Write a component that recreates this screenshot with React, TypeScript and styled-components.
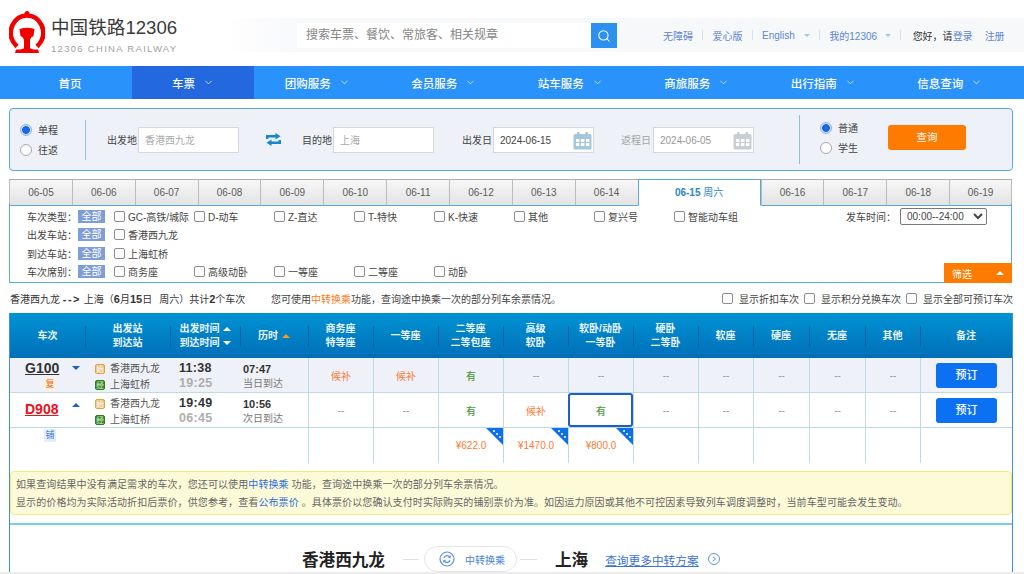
import styled, { createGlobalStyle } from "styled-components";
import { ChevronDown, Search } from "lucide-react";

const GlobalStyle = createGlobalStyle`
  html, body {
    margin: 0;
    background: #fff;
    overflow: hidden;
  }
  body {
    font-family: "Liberation Sans", "Noto Sans CJK SC", sans-serif;
    font-size: 10px;
    color: #444;
  }
  * {
    box-sizing: border-box;
  }
`;

const COLUMNS = "75px 85px 70px 68px repeat(6, 65px) 55px 56px 56px 55px 92px";

const Page = styled.div`
  position: relative;
  width: 1024px;
  height: 574px;
  overflow: hidden;
  &::after {
    content: "";
    position: absolute;
    left: 0;
    right: 0;
    bottom: 0;
    height: 2px;
    background: #ececec;
  }
`;

/* header */
const Header = styled.header`
  height: 66px;
  display: flex;
  align-items: flex-start;
`;

const Brand = styled.div`
  width: 220px;
  height: 66px;
  padding: 11px 0 0 9px;
  display: flex;
  gap: 6px;
`;

const BrandText = styled.div`
  padding-top: 5px;
`;

const BrandName = styled.div`
  font-size: 18.6px;
  line-height: 24px;
  color: #3a3a3a;
  white-space: nowrap;
`;

const BrandSub = styled.div`
  font-size: 9.5px;
  line-height: 12px;
  margin-top: 3px;
  letter-spacing: 1.3px;
  color: #a2a2a2;
  white-space: nowrap;
`;

const HeaderBand = styled.div`
  flex: 1;
  height: 34px;
  margin-top: 18px;
  padding-left: 77px;
  display: flex;
  align-items: flex-start;
  background: linear-gradient(90deg, #fff 0, #f7f8fa 90px);
`;

const SearchBox = styled.div`
  width: 320px;
  height: 25px;
  margin-top: 5px;
  display: flex;
  background: #fff;
`;

const SearchInput = styled.div`
  flex: 1;
  padding-left: 9px;
  font-size: 12px;
  line-height: 25px;
  color: #858585;
`;

const SearchButton = styled.div`
  width: 26px;
  display: flex;
  align-items: center;
  justify-content: center;
  background: #2c90f0;
  color: #fff;
`;

const TopLinks = styled.div`
  margin-left: 46px;
  height: 34px;
  display: flex;
  align-items: center;
  font-size: 10px;
  color: #5c86d6;
  white-space: nowrap;
`;

const TopSep = styled.span`
  width: 1px;
  height: 10px;
  margin: 0 9.25px;
  background: #d5e2f2;
`;

const Greeting = styled.span`
  margin-left: 2px;
  color: #333;
`;

const RegisterLink = styled.span`
  margin-left: 12px;
`;

const Caret = styled.span<{ $dir?: "up" | "down"; $color?: string; $size?: number; $gap?: number }>`
  display: inline-block;
  width: 0;
  height: 0;
  margin-left: ${({ $gap }) => $gap ?? 8}px;
  border-left: ${({ $size }) => $size ?? 4}px solid transparent;
  border-right: ${({ $size }) => $size ?? 4}px solid transparent;
  ${({ $dir, $color, $size }) =>
    $dir === "up"
      ? `border-bottom: ${$size ?? 4}px solid ${$color ?? "#fff"};`
      : `border-top: ${$size ?? 4}px solid ${$color ?? "#fff"};`}
`;

/* nav */
const Nav = styled.nav`
  height: 33px;
  display: grid;
  grid-template-columns: 132px 122px repeat(6, 126.5px);
  background: #2a92fb;
`;

const NavItem = styled.div<{ $active?: boolean; $home?: boolean }>`
  display: flex;
  align-items: center;
  justify-content: center;
  gap: 8px;
  padding-left: ${({ $home }) => ($home ? "8px" : "0")};
  font-size: 11.5px;
  font-weight: 500;
  color: #fff;
  background: ${({ $active }) => ($active ? "#2468df" : "transparent")};
`;

const Main = styled.main`
  padding: 9px 11px 0 9px;
`;

/* search form */
const QueryPanel = styled.section`
  height: 63px;
  display: flex;
  align-items: center;
  background: #eef1f8;
  border: 1px solid #5aa9dc;
  border-radius: 4px;
`;

const RadioColumn = styled.div<{ $left: number; $raised?: boolean }>`
  width: ${({ $left }) => $left + 38}px;
  padding-left: ${({ $left }) => $left}px;
  margin-top: ${({ $raised }) => ($raised ? "-4px" : "0")};
  display: flex;
  flex-direction: column;
  gap: 8px;
`;

const RadioRow = styled.label`
  display: flex;
  align-items: center;
  gap: 6px;
  height: 12px;
  color: #444;
  white-space: nowrap;
`;

const RadioDot = styled.span<{ $on?: boolean }>`
  width: 12px;
  height: 12px;
  border-radius: 50%;
  flex: none;
  background: ${({ $on }) => ($on ? "radial-gradient(circle, #1f66e0 0 3.6px, #cfe0f8 4.2px)" : "#fff")};
  border: 1px solid ${({ $on }) => ($on ? "#8cb4ee" : "#a8a8a8")};
`;

const Divider = styled.div<{ $height: number; $left: number }>`
  width: 1px;
  height: ${({ $height }) => $height}px;
  margin-left: ${({ $left }) => $left}px;
  background: #8dbfe0;
`;

const Field = styled.div<{ $left: number; $gap?: number; $muted?: boolean }>`
  margin-left: ${({ $left }) => $left}px;
  display: flex;
  align-items: center;
  gap: ${({ $gap }) => $gap ?? 1}px;
  white-space: nowrap;
  color: ${({ $muted }) => ($muted ? "#a4a4a4" : "#444")};
`;

const FieldInput = styled.div<{ $tone?: string }>`
  position: relative;
  width: 101px;
  height: 26px;
  padding-left: 6px;
  line-height: 25px;
  background: #fff;
  border: 1px solid #d3d8e2;
  color: ${({ $tone }) => $tone ?? "#aaa"};
`;

const CalendarSlot = styled.span`
  position: absolute;
  right: 1px;
  top: 4px;
  line-height: 0;
`;

const SwapIcon = styled.svg`
  margin-left: 27px;
  margin-right: -6px;
  flex: none;
`;

const QueryButton = styled.div`
  width: 78px;
  height: 25px;
  margin-left: 30px;
  margin-top: -4px;
  line-height: 25px;
  text-align: center;
  font-size: 10.5px;
  color: #fff;
  background: #ff7a00;
  border-radius: 3px;
`;

/* date tabs */
const Tabs = styled.div`
  margin-top: 8px;
  width: 1003px;
  height: 25px;
  display: grid;
  grid-template-columns: repeat(10, 1fr) 123px repeat(4, 1fr);
`;

const Tab = styled.div<{ $active?: boolean }>`
  text-align: center;
  line-height: 25px;
  white-space: nowrap;
  font-size: 10px;
  color: ${({ $active }) => ($active ? "#2a86c8" : "#5c5c5c")};
  background: ${({ $active }) => ($active ? "#fff" : "linear-gradient(#f7f7f7, #e3e3e3)")};
  border-top: 1px solid ${({ $active }) => ($active ? "#5aa9dc" : "#adadad")};
  border-left: 1px solid ${({ $active }) => ($active ? "#5aa9dc" : "#bcbcbc")};
  border-right: ${({ $active }) => ($active ? "1px solid #5aa9dc" : "none")};
  border-bottom: 1px solid ${({ $active }) => ($active ? "#fff" : "#5aa9dc")};
  &:last-child {
    border-right: 1px solid #bcbcbc;
  }
`;

const TabDate = styled.b`
  font-weight: 700;
`;

const FilterBox = styled.section`
  position: relative;
  width: 1003px;
  height: 80px;
  padding: 5px 0 0 17px;
  margin-top: -1px;
  border: 1px solid #5aa9dc;
  border-top-color: transparent;
  display: flex;
  flex-direction: column;
  gap: 4.5px;
`;

const FilterRow = styled.div`
  height: 14px;
  display: flex;
  align-items: center;
  white-space: nowrap;
  color: #444;
`;

const FilterLabel = styled.span`
  width: 51px;
`;

const AllPill = styled.span`
  width: 27px;
  height: 13px;
  margin-right: 9px;
  line-height: 13px;
  text-align: center;
  color: #fff;
  background: #7f9dd6;
`;

const FilterOption = styled.label`
  width: 80px;
  display: flex;
  align-items: center;
  gap: 3px;
  flex: none;
`;

const Check = styled.span`
  width: 11px;
  height: 11px;
  flex: none;
  background: #fff;
  border: 1px solid #8c8c8c;
  border-radius: 2px;
`;

const TimeFilter = styled.div`
  margin-left: 92px;
  display: flex;
  align-items: center;
  gap: 4px;
  margin-top: 1px;
`;

const TimeSelect = styled.select`
  width: 87px;
  height: 17px;
  padding: 0 0 0 2px;
  font-family: inherit;
  font-size: 10px;
  color: #444;
  background: #fff;
  border: 1px solid #777;
  border-radius: 2px;
`;

const FilterToggle = styled.div`
  position: absolute;
  right: -1px;
  bottom: -1px;
  width: 68px;
  height: 20px;
  padding: 0 8px;
  display: flex;
  align-items: center;
  justify-content: space-between;
  color: #fff;
  background: #ff7a00;
`;

/* summary line */
const Summary = styled.div`
  height: 30px;
  width: 1004px;
  display: flex;
  align-items: center;
  white-space: nowrap;
  color: #444;
`;

const SummaryRoute = styled.span`
  margin-left: 1px;
  width: 261px;
  color: #333;
`;

const RouteBold = styled.b`
  font-size: 11px;
`;

const RouteArrow = styled(RouteBold)`
  letter-spacing: 1.5px;
`;

const RouteWeek = styled.span`
  margin-left: 7px;
`;

const Hot = styled.span`
  color: #ff7a1a;
`;

const SummaryOptions = styled.div`
  margin-left: auto;
  display: flex;
  gap: 5px;
`;

const SummaryOption = styled.label`
  display: flex;
  align-items: center;
  gap: 6px;
`;

/* results */
const Results = styled.section`
  width: 1004px;
  height: 261px;
  border-left: 1px solid #3f93d2;
  border-right: 1px solid #3f93d2;
`;

const TableHead = styled.div`
  height: 45px;
  display: grid;
  grid-template-columns: ${COLUMNS};
  background: linear-gradient(#0093d4, #006fb8);
`;

const HeadCell = styled.div<{ $first?: boolean }>`
  position: relative;
  padding-top: 1px;
  display: flex;
  flex-direction: column;
  justify-content: center;
  align-items: center;
  font-size: 10px;
  font-weight: 700;
  line-height: 14px;
  color: #eaf5ff;
  white-space: nowrap;
  &::before {
    content: "";
    display: ${({ $first }) => ($first ? "none" : "block")};
    position: absolute;
    left: 0;
    top: 13px;
    bottom: 11px;
    width: 1px;
    background: #0b62a3;
  }
`;

const HeadLine = styled.span`
  display: flex;
  align-items: center;
`;

const Row = styled.div<{ $shaded?: boolean; $flush?: boolean }>`
  height: 35px;
  display: grid;
  grid-template-columns: ${COLUMNS};
  background: ${({ $shaded }) => ($shaded ? "#eef1f8" : "#fff")};
  border-bottom: ${({ $flush }) => ($flush ? "none" : "1px solid #bcdbe4")};
`;

const TrainCell = styled.div`
  position: relative;
  padding: 3px 0 0 15px;
`;

const TrainNo = styled.div<{ $red?: boolean }>`
  font-size: 14px;
  font-weight: 700;
  line-height: 15px;
  margin-top: ${({ $red }) => ($red ? "6px" : "0")};
  text-decoration: underline;
  color: ${({ $red }) => ($red ? "#e8111d" : "#333")};
`;

const TrainCaret = styled.span<{ $low?: boolean }>`
  position: absolute;
  top: ${({ $low }) => ($low ? "10px" : "8px")};
  left: 62px;
  line-height: 0;
`;

const Tag = styled.span<{ $blue?: boolean }>`
  position: absolute;
  left: 34px;
  bottom: 1px;
  width: 12px;
  height: 13px;
  font-size: 9px;
  line-height: 13px;
  text-align: center;
  color: ${({ $blue }) => ($blue ? "#3b7fd8" : "#ee6a10")};
  background: ${({ $blue }) => ($blue ? "#e4eefb" : "#fdf0e0")};
`;

const BunkTag = styled(Tag)`
  bottom: auto;
  top: 1px;
`;

const StationCell = styled.div`
  padding: 3px 0 0 10px;
  display: flex;
  flex-direction: column;
  justify-content: center;
  gap: 5px;
`;

const StationLine = styled.div`
  display: flex;
  align-items: center;
  gap: 5px;
  line-height: 11px;
  color: #555;
  white-space: nowrap;
`;

const StationBadge = styled.span<{ $kind: "start" | "via" }>`
  width: 10px;
  height: 10px;
  border-radius: 2px;
  font-size: 7.5px;
  line-height: 9px;
  text-align: center;
  color: ${({ $kind }) => ($kind === "start" ? "#fff" : "#d8ecd0")};
  background: ${({ $kind }) => ($kind === "start" ? "#efc27c" : "#3f8f2e")};
  border: 1px solid ${({ $kind }) => ($kind === "start" ? "#d9a24f" : "#2f7a22")};
`;

const TimeCell = styled.div`
  padding: 2px 0 0 9px;
  display: flex;
  flex-direction: column;
  justify-content: center;
  font-size: 12.5px;
  font-weight: 700;
  line-height: 15px;
  color: #333;
  letter-spacing: 0.3px;
`;

const ArriveTime = styled.span`
  color: #aeaeae;
`;

const DurationCell = styled.div`
  padding: 2px 0 0 3px;
  display: flex;
  flex-direction: column;
  justify-content: center;
  gap: 1px;
  line-height: 14px;
  color: #777;
`;

const DurationValue = styled.b`
  font-size: 11px;
  color: #333;
`;

const SeatCell = styled.div<{ $tone?: "hot" | "ok" | "none"; $selected?: boolean }>`
  position: relative;
  display: flex;
  align-items: center;
  justify-content: center;
  border-left: 1px solid #bcdbe4;
  font-size: 10px;
  color: ${({ $tone }) => ($tone === "hot" ? "#ff7a33" : $tone === "ok" ? "#4c9a3c" : "#999")};
  font-weight: ${({ $tone }) => ($tone === "ok" ? 500 : 400)};
  ${({ $selected }) =>
    $selected ? "outline: 2px solid #1f5ec9; outline-offset: -2px; border-radius: 3px;" : ""}
`;

const Corner = styled.svg`
  position: absolute;
  top: 0;
  right: 0;
`;

const BookCell = styled.div`
  display: flex;
  align-items: center;
  justify-content: center;
  border-left: 1px solid #bcdbe4;
`;

const BookButton = styled.div`
  width: 61px;
  height: 25px;
  margin-top: 1px;
  line-height: 25px;
  text-align: center;
  font-size: 11px;
  font-weight: 500;
  color: #fff;
  background: #0b70f2;
  border-radius: 3px;
`;

const Notice = styled.div`
  height: 44px;
  margin-top: 8px;
  padding: 1px 0 0 5px;
  font-size: 10px;
  line-height: 18px;
  letter-spacing: 0.1px;
  display: flex;
  flex-direction: column;
  justify-content: center;
  color: #666;
  background: #fdfad8;
  border: 1px solid #f7e87e;
  border-radius: 4px;
  white-space: nowrap;
`;

const Link = styled.span`
  color: #2a6fe0;
`;

const Transfer = styled.div`
  height: 70px;
  margin-top: 8px;
  padding-left: 292px;
  display: flex;
  align-items: center;
  border-top: 2px solid #7accef;
  white-space: nowrap;
`;

const City = styled.div`
  font-size: 16.6px;
  font-weight: 700;
  color: #222;
`;

const Dash = styled.span<{ $width: number; $before: number; $after: number }>`
  width: ${({ $width }) => $width}px;
  height: 1px;
  margin: 0 ${({ $after }) => $after}px 0 ${({ $before }) => $before}px;
  background: #e0e0e0;
`;

const TransferPill = styled.div`
  width: 93px;
  height: 26px;
  padding-left: 14px;
  display: flex;
  align-items: center;
  gap: 10px;
  color: #4a80dc;
  background: #fff;
  border: 1px solid #e6e6e6;
  border-radius: 13px;
`;

const MoreLink = styled.span`
  margin-left: 17px;
  font-size: 11.7px;
  color: #3c72d8;
  text-decoration: underline;
`;

const MoreIcon = styled.svg`
  margin-left: 9px;
`;

function Logo() {
  return (
    <svg width="36" height="42" viewBox="0 0 36 42">
      <circle cx="18" cy="2.5" r="2.5" fill="#f20000" />
      <path
        d="M8 35.5 C1 29 0.5 21 3.5 14 C7 7 12 4.5 18 4.5 C24 4.5 29 7 32.5 14 C35.5 21 35 29 28 35.5"
        fill="none"
        stroke="#f20000"
        strokeWidth="4.6"
      />
      <path
        d="M10.5 18 Q18 15.5 25.5 18 L24.5 25 Q21.5 26 21 29 L21 37 Q22 38.5 29 38.5 L30 42 L6 42 L7 38.5 Q14 38.5 15 37 L15 29 Q14.5 26 11.5 25 Z"
        fill="#f20000"
      />
    </svg>
  );
}

function SwapArrows() {
  return (
    <SwapIcon width="15" height="13" viewBox="0 0 15 13">
      <path d="M1.2 6 V3.2 H10" fill="none" stroke="#1787c9" strokeWidth="2.4" />
      <path d="M9.5 0 L14.5 3.2 L9.5 6.4 Z" fill="#1787c9" />
      <path d="M13.8 7 V9.8 H5" fill="none" stroke="#1787c9" strokeWidth="2.4" />
      <path d="M5.5 6.6 L0.5 9.8 L5.5 13 Z" fill="#1787c9" />
    </SwapIcon>
  );
}

function CalendarIcon({ color }: { color: string }) {
  return (
    <svg width="19" height="18" viewBox="0 0 19 18">
      <rect x="0.5" y="2" width="18" height="15.5" rx="1.5" fill={color} />
      <rect x="4" y="0" width="2.5" height="4" fill={color} />
      <rect x="12.5" y="0" width="2.5" height="4" fill={color} />
      {[7, 11].map((y) =>
        [3, 8, 13].map((x) => <rect key={`${x}-${y}`} x={x} y={y} width="3.4" height="3" fill="#fff" />),
      )}
    </svg>
  );
}

function CornerMark() {
  return (
    <Corner width="17" height="17" viewBox="0 0 17 17">
      <path d="M0 0 H17 V17 Z" fill="#0f6fe8" />
      <circle cx="8" cy="3" r="1" fill="#fff" />
      <circle cx="11" cy="6" r="1" fill="#fff" />
      <circle cx="14" cy="9" r="1" fill="#fff" />
    </Corner>
  );
}

const DATES_BEFORE = ["06-05", "06-06", "06-07", "06-08", "06-09", "06-10", "06-11", "06-12", "06-13", "06-14"];
const DATES_AFTER = ["06-16", "06-17", "06-18", "06-19"];

const NAV_ITEMS = ["团购服务", "会员服务", "站车服务", "商旅服务", "出行指南", "信息查询"];

const TYPE_OPTIONS = ["GC-高铁/城际", "D-动车", "Z-直达", "T-特快", "K-快速", "其他", "复兴号", "智能动车组"];
const SEAT_OPTIONS = ["商务座", "高级动卧", "一等座", "二等座", "动卧"];

const HEAD_SEATS: [string, string?][] = [
  ["商务座", "特等座"],
  ["一等座"],
  ["二等座", "二等包座"],
  ["高级", "软卧"],
  ["软卧/动卧", "一等卧"],
  ["硬卧", "二等卧"],
  ["软座"],
  ["硬座"],
  ["无座"],
  ["其他"],
];

type Tone = "hot" | "ok" | "none";
const seat = (text: string): { text: string; tone: Tone } => ({
  text,
  tone: text === "候补" ? "hot" : text === "有" ? "ok" : "none",
});

const G100 = ["候补", "候补", "有", "--", "--", "--", "--", "--", "--", "--"].map(seat);
const D908 = ["--", "--", "有", "候补", "有", "--", "--", "--", "--", "--"].map(seat);
const PRICES = ["", "", "¥622.0", "¥1470.0", "¥800.0", "", "", "", "", ""];

function Stations() {
  return (
    <StationCell>
      <StationLine>
        <StationBadge $kind="start">始</StationBadge>
        香港西九龙
      </StationLine>
      <StationLine>
        <StationBadge $kind="via">经</StationBadge>
        上海虹桥
      </StationLine>
    </StationCell>
  );
}

export default function App() {
  return (
    <Page>
      <GlobalStyle />
      <Header>
        <Brand>
          <Logo />
          <BrandText>
            <BrandName>中国铁路12306</BrandName>
            <BrandSub>12306 CHINA RAILWAY</BrandSub>
          </BrandText>
        </Brand>
        <HeaderBand>
          <SearchBox>
            <SearchInput>搜索车票、餐饮、常旅客、相关规章</SearchInput>
            <SearchButton>
              <Search size={14} strokeWidth={1.8} />
            </SearchButton>
          </SearchBox>
          <TopLinks>
            无障碍
            <TopSep />
            爱心版
            <TopSep />
            English
            <Caret $color="#a9c3ea" $size={3.5} $gap={9} />
            <TopSep />
            我的12306
            <Caret $color="#a9c3ea" $size={3.5} />
            <TopSep />
            <Greeting>您好&#xFF0C;请</Greeting>登录
            <RegisterLink>注册</RegisterLink>
          </TopLinks>
        </HeaderBand>
      </Header>

      <Nav>
        <NavItem $home>首页</NavItem>
        <NavItem $active>
          车票 <ChevronDown size={11} strokeWidth={1.5} />
        </NavItem>
        {NAV_ITEMS.map((item) => (
          <NavItem key={item}>
            {item} <ChevronDown size={11} strokeWidth={1.5} />
          </NavItem>
        ))}
      </Nav>

      <Main>
        <QueryPanel>
          <RadioColumn $left={10}>
            <RadioRow>
              <RadioDot $on />
              单程
            </RadioRow>
            <RadioRow>
              <RadioDot />
              往返
            </RadioRow>
          </RadioColumn>
          <Divider $height={40} $left={27} />
          <Field $left={21}>
            出发地
            <FieldInput>香港西九龙</FieldInput>
          </Field>
          <SwapArrows />
          <Field $left={27}>
            目的地
            <FieldInput>上海</FieldInput>
          </Field>
          <Field $left={28}>
            出发日
            <FieldInput $tone="#444">
              2024-06-15
              <CalendarSlot>
                <CalendarIcon color="#a5c7dd" />
              </CalendarSlot>
            </FieldInput>
          </Field>
          <Field $left={27} $gap={2} $muted>
            返程日
            <FieldInput $tone="#999">
              2024-06-05
              <CalendarSlot>
                <CalendarIcon color="#c9ced4" />
              </CalendarSlot>
            </FieldInput>
          </Field>
          <Divider $height={49} $left={45} />
          <RadioColumn $left={20} $raised>
            <RadioRow>
              <RadioDot $on />
              普通
            </RadioRow>
            <RadioRow>
              <RadioDot />
              学生
            </RadioRow>
          </RadioColumn>
          <QueryButton>查询</QueryButton>
        </QueryPanel>

        <Tabs>
          {DATES_BEFORE.map((date) => (
            <Tab key={date}>{date}</Tab>
          ))}
          <Tab $active>
            <TabDate>06-15</TabDate> 周六
          </Tab>
          {DATES_AFTER.map((date) => (
            <Tab key={date}>{date}</Tab>
          ))}
        </Tabs>

        <FilterBox>
          <FilterRow>
            <FilterLabel>车次类型&#xFF1A;</FilterLabel>
            <AllPill>全部</AllPill>
            {TYPE_OPTIONS.map((option) => (
              <FilterOption key={option}>
                <Check />
                {option}
              </FilterOption>
            ))}
            <TimeFilter>
              发车时间&#xFF1A;
              <TimeSelect defaultValue="all">
                <option value="all">00:00--24:00</option>
              </TimeSelect>
            </TimeFilter>
          </FilterRow>
          <FilterRow>
            <FilterLabel>出发车站&#xFF1A;</FilterLabel>
            <AllPill>全部</AllPill>
            <FilterOption>
              <Check />
              香港西九龙
            </FilterOption>
          </FilterRow>
          <FilterRow>
            <FilterLabel>到达车站&#xFF1A;</FilterLabel>
            <AllPill>全部</AllPill>
            <FilterOption>
              <Check />
              上海虹桥
            </FilterOption>
          </FilterRow>
          <FilterRow>
            <FilterLabel>车次席别&#xFF1A;</FilterLabel>
            <AllPill>全部</AllPill>
            {SEAT_OPTIONS.map((option) => (
              <FilterOption key={option}>
                <Check />
                {option}
              </FilterOption>
            ))}
          </FilterRow>
          <FilterToggle>
            筛选
            <Caret $dir="up" $gap={0} />
          </FilterToggle>
        </FilterBox>

        <Summary>
          <SummaryRoute>
            香港西九龙 <RouteArrow>--&gt;</RouteArrow> 上海&#xFF08;<RouteBold>6</RouteBold>月<RouteBold>15</RouteBold>日
            <RouteWeek>周六</RouteWeek>&#xFF09;共计<RouteBold>2</RouteBold>个车次
          </SummaryRoute>
          <span>
            您可使用<Hot>中转换乘</Hot>功能&#xFF0C;查询途中换乘一次的部分列车余票情况。
          </span>
          <SummaryOptions>
            <SummaryOption>
              <Check />
              显示折扣车次
            </SummaryOption>
            <SummaryOption>
              <Check />
              显示积分兑换车次
            </SummaryOption>
            <SummaryOption>
              <Check />
              显示全部可预订车次
            </SummaryOption>
          </SummaryOptions>
        </Summary>

        <Results>
          <TableHead>
            <HeadCell $first>车次</HeadCell>
            <HeadCell>
              <span>出发站</span>
              <span>到达站</span>
            </HeadCell>
            <HeadCell>
              <HeadLine>
                出发时间
                <Caret $dir="up" $gap={3} />
              </HeadLine>
              <HeadLine>
                到达时间
                <Caret $gap={3} />
              </HeadLine>
            </HeadCell>
            <HeadCell>
              <HeadLine>
                历时
                <Caret $dir="up" $color="#f59a23" $gap={4} />
              </HeadLine>
            </HeadCell>
            {HEAD_SEATS.map(([top, bottom]) => (
              <HeadCell key={top}>
                <span>{top}</span>
                {bottom && <span>{bottom}</span>}
              </HeadCell>
            ))}
            <HeadCell>备注</HeadCell>
          </TableHead>

          <Row $shaded>
            <TrainCell>
              <TrainNo>G100</TrainNo>
              <TrainCaret>
                <Caret $color="#1f5ec9" $gap={0} />
              </TrainCaret>
              <Tag>复</Tag>
            </TrainCell>
            <Stations />
            <TimeCell>
              11:38
              <ArriveTime>19:25</ArriveTime>
            </TimeCell>
            <DurationCell>
              <DurationValue>07:47</DurationValue>
              当日到达
            </DurationCell>
            {G100.map((cell, i) => (
              <SeatCell key={i} $tone={cell.tone}>
                {cell.text}
              </SeatCell>
            ))}
            <BookCell>
              <BookButton>预订</BookButton>
            </BookCell>
          </Row>

          <Row>
            <TrainCell>
              <TrainNo $red>D908</TrainNo>
              <TrainCaret $low>
                <Caret $dir="up" $color="#1f5ec9" $gap={0} />
              </TrainCaret>
            </TrainCell>
            <Stations />
            <TimeCell>
              19:49
              <ArriveTime>06:45</ArriveTime>
            </TimeCell>
            <DurationCell>
              <DurationValue>10:56</DurationValue>
              次日到达
            </DurationCell>
            {D908.map((cell, i) => (
              <SeatCell key={i} $tone={cell.tone} $selected={i === 4}>
                {cell.text}
              </SeatCell>
            ))}
            <BookCell>
              <BookButton>预订</BookButton>
            </BookCell>
          </Row>

          <Row $flush>
            <TrainCell>
              <BunkTag $blue>铺</BunkTag>
            </TrainCell>
            <div />
            <div />
            <div />
            {PRICES.map((price, i) => (
              <SeatCell key={i} $tone="hot">
                {price}
                {price && <CornerMark />}
              </SeatCell>
            ))}
            <BookCell />
          </Row>

          <Notice>
            <div>
              如果查询结果中没有满足需求的车次&#xFF0C;您还可以使用<Link>中转换乘</Link> 功能&#xFF0C;查询途中换乘一次的部分列车余票情况。
            </div>
            <div>
              显示的价格均为实际活动折扣后票价&#xFF0C;供您参考&#xFF0C;查看<Link>公布票价</Link> 。具体票价以您确认支付时实际购买的铺别票价为准。如因运力原因或其他不可控因素导致列车调度调整时&#xFF0C;当前车型可能会发生变动。
            </div>
          </Notice>

          <Transfer>
            <City>香港西九龙</City>
            <Dash $width={16} $before={18} $after={5} />
            <TransferPill>
              <svg width="16" height="16" viewBox="0 0 16 16" fill="none" stroke="#5b93e6" strokeWidth="1.2">
                <circle cx="8" cy="8" r="7" />
                <path d="M11 6.2 A3.4 3.4 0 0 0 5 6.6 M5 9.8 A3.4 3.4 0 0 0 11 9.4" strokeWidth="1.4" />
                <path d="M11.3 4.6 V6.6 H9.3 M4.7 11.4 V9.4 H6.7" strokeWidth="1" />
              </svg>
              中转换乘
            </TransferPill>
            <Dash $width={17} $before={3} $after={18} />
            <City>上海</City>
            <MoreLink>查询更多中转方案</MoreLink>
            <MoreIcon width="12" height="12" viewBox="0 0 12 12" fill="none" stroke="#5b93e6">
              <circle cx="6" cy="6" r="5.5" />
              <path d="M5 4 L7.4 6 L5 8" />
            </MoreIcon>
          </Transfer>
        </Results>
      </Main>
    </Page>
  );
}
